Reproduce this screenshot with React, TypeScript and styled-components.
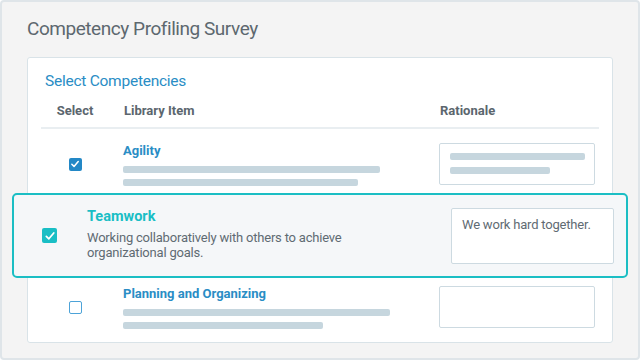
import React from "react";
import styled, { createGlobalStyle } from "styled-components";

const GlobalStyle = createGlobalStyle`
  html, body {
    margin: 0;
    padding: 0;
    background: #ffffff;
  }
  body {
    font-family: Roboto, "Liberation Sans", Arial, sans-serif;
  }
`;

const Panel = styled.div`
  box-sizing: border-box;
  width: 640px;
  height: 360px;
  overflow: hidden;
  background: #f4f4f4;
  border: 2px solid #dfe5e9;
  border-radius: 4px;
  padding: 15px 25px 0 25px;
`;

const Title = styled.h1`
  margin: 0;
  font-size: 19px;
  line-height: 24px;
  letter-spacing: -0.45px;
  font-weight: 400;
  color: #5d686f;
`;

const Card = styled.div`
  box-sizing: border-box;
  margin-top: 16px;
  background: #ffffff;
  border: 1px solid #d9e3e8;
  border-radius: 3px;
  padding: 13px 13px 12px 13px;
  display: flex;
  flex-direction: column;
`;

const CardHeading = styled.h2`
  margin: 0;
  padding-left: 4px;
  font-size: 15.5px;
  line-height: 20px;
  letter-spacing: -0.25px;
  font-weight: 400;
  color: #2a8dc5;
`;

const Grid = styled.div`
  display: grid;
  grid-template-columns: 68px 1fr 156px;
  column-gap: 14px;
  padding-right: 4px;
`;

const HeaderRow = styled(Grid)`
  margin-top: 12px;
  padding-bottom: 8px;
  border-bottom: 2px solid #e9eef1;
`;

const HeaderCell = styled.div<{ $center?: boolean }>`
  font-size: 13px;
  line-height: 16px;
  font-weight: 700;
  color: #5b666e;
  text-align: ${(p) => (p.$center ? "center" : "left")};
  padding-left: ${(p) => (p.$center ? "0" : "1px")};
`;

const Row = styled(Grid)<{ $top: number }>`
  margin-top: ${(p) => p.$top}px;
  height: 46px;
  align-items: center;
`;

const CheckCell = styled.div`
  display: flex;
  justify-content: center;
`;

const Box = styled.div<{ $size: number; $checked: boolean; $tone: string }>`
  box-sizing: border-box;
  width: ${(p) => p.$size}px;
  height: ${(p) => p.$size}px;
  border-radius: 2px;
  background: ${(p) => (p.$checked ? p.$tone : "#ffffff")};
  border: ${(p) => (p.$checked ? "none" : `1.5px solid ${p.$tone}`)};
  display: flex;
  align-items: center;
  justify-content: center;
`;

const ItemCol = styled.div`
  display: flex;
  flex-direction: column;
`;

const ItemTitle = styled.div<{ $tone: string; $size: number }>`
  font-size: ${(p) => p.$size}px;
  line-height: ${(p) => Math.round(p.$size) + 3}px;
  font-weight: 700;
  color: ${(p) => p.$tone};
`;

const Bar = styled.div<{ $w: number; $first?: boolean }>`
  width: ${(p) => p.$w}px;
  height: 7px;
  border-radius: 2px;
  background: #c6d6de;
  margin-top: ${(p) => (p.$first ? 7 : 6)}px;
`;

const Rationale = styled.div`
  box-sizing: border-box;
  height: 42px;
  background: #ffffff;
  border: 1px solid #cddae1;
  border-radius: 2px;
  padding: 9px 9px 0 10px;
`;

const InnerBar = styled.div<{ $w?: number }>`
  height: 7px;
  border-radius: 2px;
  background: #c6d6de;
  width: ${(p) => (p.$w ? `${p.$w}px` : "100%")};
  margin-bottom: 7px;
`;

const Featured = styled.div`
  position: relative;
  z-index: 1;
  box-sizing: border-box;
  margin: 6px -29px 0 -29px;
  height: 85px;
  border: 2px solid #1bbec4;
  border-radius: 5px;
  background: #f5f7f9;
  display: grid;
  grid-template-columns: 15px 1fr 163px;
  column-gap: 30px;
  align-items: center;
  padding: 0 12px 0 28px;
`;

const FeaturedText = styled.div`
  display: flex;
  flex-direction: column;
  padding-bottom: 3px;
  margin-right: -15px;
`;

const Description = styled.div`
  margin-top: 4px;
  max-width: 300px;
  font-size: 13px;
  line-height: 15px;
  letter-spacing: -0.2px;
  color: #5f6b73;
`;

const TextArea = styled.div`
  box-sizing: border-box;
  height: 56px;
  background: #ffffff;
  border: 1px solid #cddae1;
  border-radius: 2px;
  padding: 8px 10px;
  font-size: 13px;
  line-height: 16px;
  letter-spacing: -0.2px;
  color: #5f6b73;
`;

const Check = ({ size }: { size: number }) => (
  <svg width={size} height={size} viewBox="0 0 16 16" fill="none">
    <path d="M3.8 8.4 L6.7 11.2 L12.3 4.6" stroke="#ffffff" strokeWidth="2" strokeLinecap="round" strokeLinejoin="round" />
  </svg>
);

const BLUE = "#2a8dc5";
const BOX_BLUE = "#2388c6";
const TEAL = "#19bec5";

export default function App() {
  return (
    <>
      <GlobalStyle />
      <Panel>
        <Title>Competency Profiling Survey</Title>
        <Card>
          <CardHeading>Select Competencies</CardHeading>
          <HeaderRow>
            <HeaderCell $center>Select</HeaderCell>
            <HeaderCell>Library Item</HeaderCell>
            <HeaderCell>Rationale</HeaderCell>
          </HeaderRow>

          <Row $top={12}>
            <CheckCell>
              <Box $size={13} $checked $tone={BOX_BLUE}>
                <Check size={12} />
              </Box>
            </CheckCell>
            <ItemCol>
              <ItemTitle $tone={BLUE} $size={13}>Agility</ItemTitle>
              <Bar $w={257} $first />
              <Bar $w={235} />
            </ItemCol>
            <Rationale>
              <InnerBar />
              <InnerBar $w={100} />
            </Rationale>
          </Row>

          <Featured>
            <Box $size={15} $checked $tone={TEAL}>
              <Check size={14} />
            </Box>
            <FeaturedText>
              <ItemTitle $tone={TEAL} $size={14.5}>Teamwork</ItemTitle>
              <Description>
                Working collaboratively with others to achieve organizational goals.
              </Description>
            </FeaturedText>
            <TextArea>We work hard together.</TextArea>
          </Featured>

          <Row $top={6}>
            <CheckCell>
              <Box $size={13} $checked={false} $tone="#4da3d8" />
            </CheckCell>
            <ItemCol>
              <ItemTitle $tone={BLUE} $size={13}>Planning and Organizing</ItemTitle>
              <Bar $w={267} $first />
              <Bar $w={200} />
            </ItemCol>
            <Rationale />
          </Row>
        </Card>
      </Panel>
    </>
  );
}
